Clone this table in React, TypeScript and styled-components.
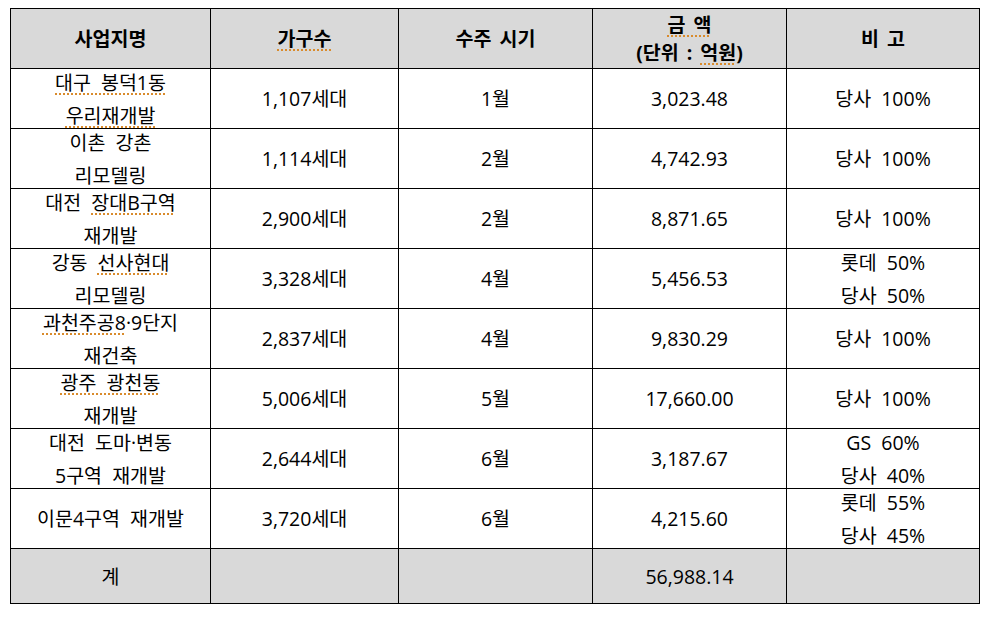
import React from 'react';
import styled, { createGlobalStyle, css } from 'styled-components';

const GlobalStyle = createGlobalStyle`
  html, body {
    margin: 0;
    padding: 0;
    background: #ffffff;
  }
  body {
    font-family: "Open Sans", "Noto Sans CJK KR", sans-serif;
    color: #000000;
  }
`;

const Page = styled.div`
  padding: 8px 0 0 10px;
`;

const Table = styled.table`
  width: 969px;
  border-collapse: collapse;
  table-layout: fixed;
  font-size: 19.5px;
`;

const HeadCell = styled.th`
  height: 59px;
  padding: 0;
  border: 1px solid #000;
  background: #d9d9d9;
  font-weight: 700;
  line-height: 28px;
  text-align: center;
  vertical-align: middle;
  word-spacing: 3px;
`;

const Row = styled.tr<{ $total?: boolean }>`
  height: 60px;
  ${props =>
    props.$total &&
    css`
      height: 55px;
      background: #d9d9d9;
      & > td {
        height: 54px;
      }
    `}
`;

const Cell = styled.td`
  height: 59px;
  padding: 0;
  border: 1px solid #000;
  line-height: 29px;
  text-align: center;
  vertical-align: middle;
  word-spacing: 5px;
  white-space: nowrap;
  overflow: hidden;
`;

const Stack = styled.div`
  display: flex;
  flex-direction: column;
  align-items: center;
  gap: 4px;
  margin: -2px 0;
`;

const Line = styled.div``;

const Spell = styled.span`
  text-decoration: underline dotted #d98b2c;
  text-decoration-thickness: 1.5px;
  text-underline-offset: 4px;
`;

const widths = [200, 188, 194, 194, 193];

type Item = {
  name: React.ReactNode[];
  households: string;
  month: string;
  amount: string;
  note: string[];
};

const items: Item[] = [
  {
    name: [<Spell key="a">대구 봉덕1동</Spell>, <Spell key="b">우리재개발</Spell>],
    households: '1,107세대',
    month: '1월',
    amount: '3,023.48',
    note: ['당사 100%'],
  },
  { name: ['이촌 강촌', '리모델링'], households: '1,114세대', month: '2월', amount: '4,742.93', note: ['당사 100%'] },
  {
    name: [<>대전 <Spell>장대B구역</Spell></>, '재개발'],
    households: '2,900세대',
    month: '2월',
    amount: '8,871.65',
    note: ['당사 100%'],
  },
  {
    name: [<>강동 <Spell>선사현대</Spell></>, '리모델링'],
    households: '3,328세대',
    month: '4월',
    amount: '5,456.53',
    note: ['롯데 50%', '당사 50%'],
  },
  {
    name: [<><Spell>과천주공8</Spell>·9단지</>, '재건축'],
    households: '2,837세대',
    month: '4월',
    amount: '9,830.29',
    note: ['당사 100%'],
  },
  {
    name: [<Spell key="c">광주 광천동</Spell>, '재개발'],
    households: '5,006세대',
    month: '5월',
    amount: '17,660.00',
    note: ['당사 100%'],
  },
  {
    name: ['대전 도마·변동', '5구역 재개발'],
    households: '2,644세대',
    month: '6월',
    amount: '3,187.67',
    note: ['GS 60%', '당사 40%'],
  },
  {
    name: ['이문4구역 재개발'],
    households: '3,720세대',
    month: '6월',
    amount: '4,215.60',
    note: ['롯데 55%', '당사 45%'],
  },
];

const Lines: React.FC<{ lines: React.ReactNode[] }> = ({ lines }) =>
  lines.length > 1 ? (
    <Stack>
      {lines.map((n, j) => (
        <Line key={j}>{n}</Line>
      ))}
    </Stack>
  ) : (
    <>{lines[0]}</>
  );

export default function App() {
  return (
    <Page>
      <GlobalStyle />
      <Table>
        <colgroup>
          {widths.map((w, i) => (
            <col key={i} style={{ width: w }} />
          ))}
        </colgroup>
        <thead>
          <tr>
            <HeadCell>사업지명</HeadCell>
            <HeadCell>
              <Spell>가구수</Spell>
            </HeadCell>
            <HeadCell>수주 시기</HeadCell>
            <HeadCell>
              <Line>
                <Spell>금 액</Spell>
              </Line>
              <Line>
                (단위 : <Spell>억원</Spell>)
              </Line>
            </HeadCell>
            <HeadCell>비 고</HeadCell>
          </tr>
        </thead>
        <tbody>
          {items.map((item, i) => (
            <Row key={i}>
              <Cell>
                <Lines lines={item.name} />
              </Cell>
              <Cell>{item.households}</Cell>
              <Cell>{item.month}</Cell>
              <Cell>{item.amount}</Cell>
              <Cell>
                <Lines lines={item.note} />
              </Cell>
            </Row>
          ))}
          <Row $total>
            <Cell>계</Cell>
            <Cell />
            <Cell />
            <Cell>56,988.14</Cell>
            <Cell />
          </Row>
        </tbody>
      </Table>
    </Page>
  );
}
